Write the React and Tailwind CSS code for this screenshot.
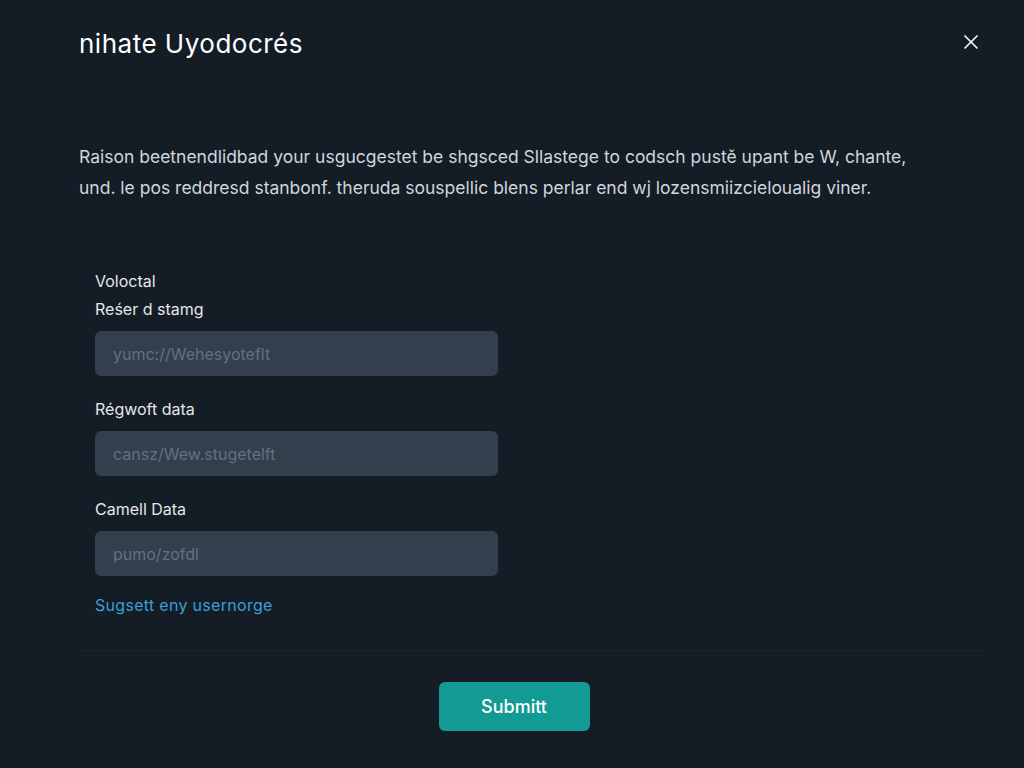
import React from 'react';
import { X } from 'lucide-react';

function Field({ label, placeholder, className = '' }) {
  return (
    <div className={className}>
      <label className="block text-[16px] leading-6 text-gray-200 mb-2.5">{label}</label>
      <input
        type="text"
        placeholder={placeholder}
        className="w-[403px] h-[45px] rounded-md bg-[#333f4c] px-[18px] text-[16px] text-gray-200 placeholder:text-[#637080] outline-none"
      />
    </div>
  );
}

export default function App() {
  return (
    <div className="w-[1024px] h-[768px] bg-[#141c26] font-['Inter',sans-serif] text-gray-100 overflow-hidden">
      <div className="px-[79px] pt-7">
        {/* Header */}
        <div className="flex items-start justify-between">
          <h1 className="text-[26px] leading-8 font-normal tracking-[0.5px] text-white">nihate Uyodocrés</h1>
          <button className="mt-[2px] -mr-[38px] text-gray-100">
            <X className="w-[24px] h-[24px]" strokeWidth={1.75} />
          </button>
        </div>

        {/* Description */}
        <p className="mt-[81px] text-[17.5px] leading-[31px] text-gray-300">
          Raison beetnendlidbad your usgucgestet be shgsced Sllastege to codsch pustě upant be W, chante,
          <br />
          und. le pos reddresd stanbonf. theruda souspellic blens perlar end wj lozensmiizcieloualig viner.
        </p>

        {/* Form */}
        <div className="pl-4 mt-[66px]">
          <p className="text-[16px] leading-6 text-gray-200 mb-1">Voloctal</p>
          <Field label="Reśer d stamg" placeholder="yumc://Wehesyoteflt" />
          <Field className="mt-[21px]" label="Régwoft data" placeholder="cansz/Wew.stugetelft" />
          <Field className="mt-[21px]" label="Camell Data" placeholder="pumo/zofdl" />
          <a href="#" className="block mt-[17px] text-[16px] leading-6 tracking-[0.3px] text-[#3b9fd6]">Sugsett eny usernorge</a>
        </div>
      </div>

      {/* Footer */}
      <div className="ml-[80px] mr-[39px] mt-[33px] border-t border-[#1b2530]" />
      <div className="flex justify-center pt-[31px] pl-[4px]">
        <button className="w-[151px] h-[49px] rounded-md bg-[#129a94] text-[18px] font-medium text-white">
          Submitt
        </button>
      </div>
    </div>
  );
}
